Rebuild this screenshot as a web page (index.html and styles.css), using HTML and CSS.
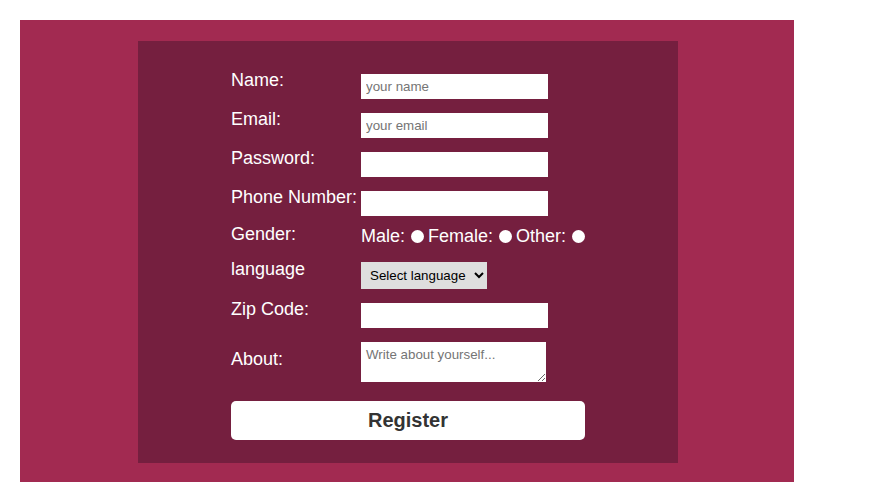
FILE: index.html
```html
<!DOCTYPE html>
<html lang="en">
<head>
<meta charset="utf-8">
<title>Registration Form</title>
<link rel="stylesheet" href="styles.css">
</head>
<body>
<div class="outer">
  <div class="card">
    <form class="form">
      <div class="row r1">
        <label class="lbl" for="name">Name:</label>
        <input class="field" id="name" type="text" placeholder="your name">
      </div>
      <div class="row r1">
        <label class="lbl" for="email">Email:</label>
        <input class="field" id="email" type="email" placeholder="your email">
      </div>
      <div class="row r1">
        <label class="lbl" for="pw">Password:</label>
        <input class="field" id="pw" type="password">
      </div>
      <div class="row r4">
        <label class="lbl" for="phone">Phone Number:</label>
        <input class="field" id="phone" type="tel">
      </div>
      <div class="row r5">
        <span class="lbl">Gender:</span>
        <div class="radios">Male:<input class="radio" type="radio" name="g">Female:<input class="radio" type="radio" name="g">Other:<input class="radio" type="radio" name="g"></div>
      </div>
      <div class="row r6">
        <label class="lbl" for="lang">language</label>
        <select class="select" id="lang">
          <option>Select language</option>
          <option>English</option>
          <option>Hindi</option>
        </select>
      </div>
      <div class="row r7">
        <label class="lbl" for="zip">Zip Code:</label>
        <input class="field" id="zip" type="text">
      </div>
      <div class="row r8">
        <label class="lbl lbl-about" for="about">About:</label>
        <textarea class="area" id="about" placeholder="Write about yourself..."></textarea>
      </div>
      <button class="btn" type="button">Register</button>
    </form>
  </div>
</div>
</body>
</html>
```

FILE: styles.css
```css
html, body {
  margin: 0;
  padding: 0;
  background: #ffffff;
}

body {
  font-family: "Liberation Sans", Arial, sans-serif;
}

.outer {
  margin: 20px 0 0 20px;
  width: 774px;
  height: 462px;
  box-sizing: border-box;
  padding: 21px 116px 19px 118px;
  background: #a22a51;
}

.card {
  width: 540px;
  height: 422px;
  box-sizing: border-box;
  padding: 29px 0 0 93px;
  background: #751f3f;
}

.form {
  display: flex;
  flex-direction: column;
  width: 354px;
}

.row {
  display: flex;
  align-items: flex-start;
  height: 39px;
}

.r4 { height: 37px; }
.r5 { height: 35px; }
.r6 { height: 40px; }
.r7 { height: 43px; }
.r8 { height: 40px; }

.lbl {
  flex: 0 0 130px;
  color: #ffffff;
  font-size: 18px;
  line-height: 21px;
}

.lbl-about {
  margin-top: 7px;
}

.field {
  margin: 4px 0 0 0;
  width: 187px;
  height: 25px;
  box-sizing: border-box;
  padding: 5px;
  border: none;
  outline: none;
  background: #ffffff;
  font-family: "Liberation Sans", Arial, sans-serif;
  font-size: 13.333px;
  color: #000;
}

.field::placeholder,
.area::placeholder {
  color: #757575;
}

.radios {
  margin-top: 2px;
  color: #ffffff;
  font-size: 18px;
  line-height: 21px;
  white-space: nowrap;
}

.radio {
  appearance: none;
  -webkit-appearance: none;
  display: inline-block;
  width: 13px;
  height: 13px;
  margin: 0 4px 0 6px;
  border-radius: 50%;
  background: #ffffff;
  vertical-align: -0.5px;
}

.select {
  margin-top: 3px;
  width: 126px;
  height: 27px;
  padding: 0 0 0 5px;
  border: none;
  border-radius: 0;
  background-color: #dedede;
  color: #000;
  font-family: "Liberation Sans", Arial, sans-serif;
  font-size: 13.333px;
}

.area {
  margin: 0;
  width: 185px;
  height: 40px;
  box-sizing: border-box;
  padding: 5px;
  border: none;
  outline: none;
  background: #ffffff;
  font-family: "Liberation Sans", Arial, sans-serif;
  font-size: 13.333px;
}

.btn {
  margin-top: 19px;
  width: 354px;
  height: 39px;
  border: none;
  border-radius: 5px;
  background: #ffffff;
  color: #333333;
  font-family: "Liberation Sans", Arial, sans-serif;
  font-size: 20px;
  font-weight: bold;
  cursor: pointer;
}
```
